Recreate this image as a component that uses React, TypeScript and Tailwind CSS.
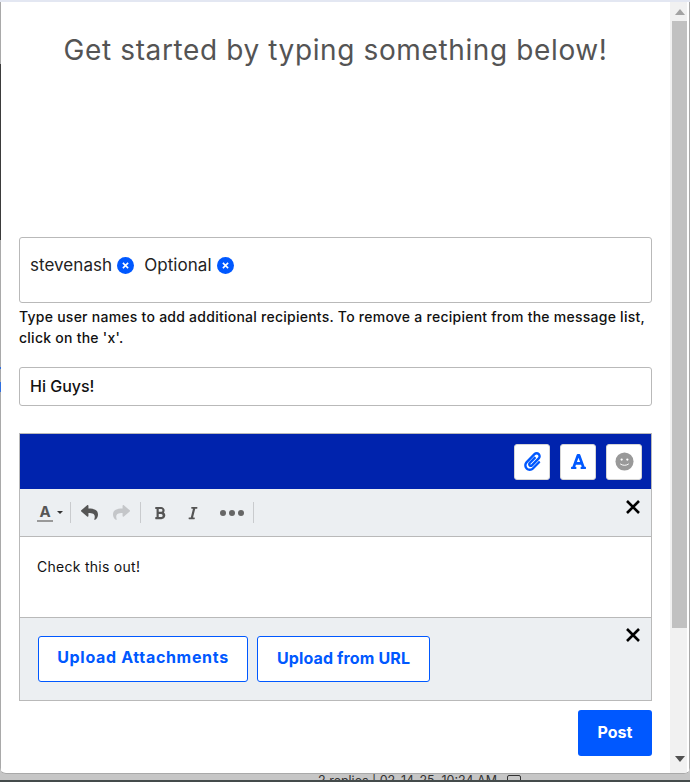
import { FaBold, FaFont, FaItalic, FaPaperclip, FaReply, FaShare } from "react-icons/fa";

const font = { fontFamily: "Inter, 'Noto Sans', sans-serif" };

function CloseX() {
  return (
    <svg viewBox="0 0 16 16" className="size-4" fill="none" stroke="#000" strokeWidth="2.6">
      <path d="M2 2l12 12M14 2L2 14" />
    </svg>
  );
}

function Chip({ label }: { label: string }) {
  return (
    <span className="flex items-center gap-[5px]">
      <span>{label}</span>
      <span className="flex size-[17px] items-center justify-center rounded-full bg-[#0058ff]">
        <svg viewBox="0 0 8 8" className="size-[7px]" fill="none" stroke="#fff" strokeWidth="1.8">
          <path d="M1 1l6 6M7 1L1 7" />
        </svg>
      </span>
    </span>
  );
}

function ToolSep() {
  return <div className="h-[21px] w-px bg-[#c9cbce]" />;
}

function HeaderButton({ children }: { children: React.ReactNode }) {
  return (
    <button type="button" className="flex size-[36px] items-center justify-center rounded-[3px] border border-[#d5d5d5] bg-white">
      {children}
    </button>
  );
}

export default function App() {
  return (
    <div className="flex h-[782px] w-[690px] flex-col overflow-hidden bg-[#c6c6c6]" style={font}>
      <div className="h-[2px] shrink-0 bg-[#e3e7f2]" />

      <div className="flex min-h-0 flex-1 overflow-hidden rounded-b-[6px] border-b border-[#a9a9a9] bg-white">
        {/* window edge, the page behind shows through in places */}
        <div className="flex w-px shrink-0 flex-col bg-[#a9a9a9]">
          <div className="h-[62px] shrink-0" />
          <div className="h-[176px] shrink-0 bg-[#3b3b3b]" />
          <div className="h-[127px] shrink-0" />
          <div className="h-[2px] shrink-0 bg-[#2f6fe0]" />
          <div className="h-[13px] shrink-0" />
          <div className="h-[10px] shrink-0 bg-[#2f6fe0]" />
        </div>

        <main className="flex w-[669px] shrink-0 flex-col pl-[18px] pr-[18px]">
          <h1 className="mt-[29px] h-[38px] text-center text-[28px] leading-[38px] tracking-[0.62px] text-[#545454]">
            Get started by typing something below!
          </h1>

          <div className="mt-[168px] flex h-[66px] items-start gap-[10px] rounded-[3px] border border-[#b9b9b9] px-[10px] pt-[17px] text-[17px] leading-[20px] tracking-[0.05px] text-[#222]">
            <Chip label="stevenash" />
            <Chip label="Optional" />
          </div>

          <p className="mt-[3px] text-[14px] font-medium leading-[21px] tracking-[0.25px] text-[#111]">
            Type user names to add additional recipients. To remove a recipient from the message list, click on the 'x'.
          </p>

          <input
            readOnly
            value="Hi Guys!"
            className="mt-[19px] h-[39px] w-full rounded-[3px] border border-[#b9b9b9] px-[10px] pb-[2px] text-[16px] font-medium text-[#111] outline-none"
          />

          <section className="mt-[27px] flex h-[268px] flex-col border border-[#b9b9b9]">
            <div className="flex h-[55px] shrink-0 items-center justify-end gap-[10px] bg-[#0023ad] pr-[9px]">
              <HeaderButton>
                <FaPaperclip className="size-[19px] text-[#0058ff]" />
              </HeaderButton>
              <HeaderButton>
                <FaFont className="size-[17px] text-[#0058ff]" />
              </HeaderButton>
              <HeaderButton>
                <svg viewBox="0 0 20 20" className="size-[19px]">
                  <circle cx="10" cy="10" r="9.5" fill="#999" />
                  <circle cx="7" cy="8" r="1.2" fill="#fff" />
                  <circle cx="13" cy="8" r="1.2" fill="#fff" />
                  <path d="M5.5 12.5c2.5 2 6.5 2 9 0" fill="none" stroke="#fff" strokeWidth="1" />
                </svg>
              </HeaderButton>
            </div>

            <div className="flex h-[48px] shrink-0 items-start justify-between border-b border-[#b9b9b9] bg-[#eceff2] pl-[18px] pr-[10px]">
              <div className="mt-[13px] flex h-[21px] items-center text-[#555]">
                <div className="flex w-[14px] flex-col items-center">
                  <span className="text-[15px] font-bold leading-[15px]">A</span>
                  <div className="mt-[1px] h-[2px] w-[16px] shrink-0 bg-[#999]" />
                </div>
                <div className="ml-[5px] mr-[7px] h-0 w-0 border-x-[3px] border-t-[3px] border-x-transparent border-t-[#333]" />
                <ToolSep />
                <FaReply className="ml-[10px] size-[17px] text-[#555]" />
                <FaShare className="ml-[15px] size-[17px] text-[#c4c6c9]" />
                <div className="ml-[10px]">
                  <ToolSep />
                </div>
                <FaBold className="ml-[12px] size-[14px] text-[#555]" />
                <FaItalic className="ml-[19px] size-[14px] text-[#555]" />
                <div className="ml-[20px] flex gap-[3px]">
                  <span className="size-[6px] rounded-full bg-[#666]" />
                  <span className="size-[6px] rounded-full bg-[#666]" />
                  <span className="size-[6px] rounded-full bg-[#666]" />
                </div>
                <div className="ml-[9px]">
                  <ToolSep />
                </div>
              </div>
              <div className="mt-[10px]">
                <CloseX />
              </div>
            </div>

            <div className="h-[81px] shrink-0 border-b border-[#b9b9b9] px-[17px] pt-[20px] text-[14px] leading-[20px] tracking-[0.27px] text-[#111]">
              Check this out!
            </div>

            <div className="flex min-h-0 flex-1 items-start justify-between bg-[#eceff2] pl-[18px] pr-[10px] pt-[18px]">
              <div className="flex gap-[9px]">
                <button
                  type="button"
                  className="h-[46px] w-[210px] rounded-[3px] border border-[#0058ff] bg-white pb-[5px] text-[16px] font-bold tracking-[0.67px] text-[#0058ff]"
                >
                  Upload Attachments
                </button>
                <button
                  type="button"
                  className="h-[46px] w-[173px] rounded-[3px] border border-[#0058ff] bg-white pb-[2px] text-[16px] font-bold tracking-[0.13px] text-[#0058ff]"
                >
                  Upload from URL
                </button>
              </div>
              <div className="mt-[-9px]">
                <CloseX />
              </div>
            </div>
          </section>

          <div className="mt-[9px] flex justify-end">
            <button type="button" className="h-[46px] w-[74px] rounded-[3px] bg-[#0058ff] pb-[2px] text-[16px] font-bold text-white">
              Post
            </button>
          </div>
        </main>

        <div className="flex w-[17px] shrink-0 flex-col bg-[#f1f1f1] pl-[2px]">
          <div className="flex h-[19px] shrink-0 items-center justify-center">
            <div className="h-0 w-0 border-x-[5px] border-b-[6px] border-x-transparent border-b-[#a3a3a3]" />
          </div>
          <div className="h-[607px] shrink-0 bg-[#c1c1c1]" />
          <div className="flex-1" />
          <div className="flex h-[19px] shrink-0 items-start justify-center pt-[2px]">
            <div className="h-0 w-0 border-x-[5px] border-t-[6px] border-x-transparent border-t-[#505050]" />
          </div>
        </div>
        <div className="w-[3px] shrink-0 border-r border-[#a9a9a9] bg-white" />
      </div>

      <div className="flex h-[8px] shrink-0 items-start gap-[10px] overflow-hidden border-b-2 border-[#444b4b] pl-[318px] text-[12.5px] leading-[13px] text-[#333]">
        <span>2 replies | 02-14-25, 10:24 AM</span>
        <div className="mt-[1px] h-[12px] w-[14px] shrink-0 rounded-[2px] border border-[#333]" />
      </div>
    </div>
  );
}
